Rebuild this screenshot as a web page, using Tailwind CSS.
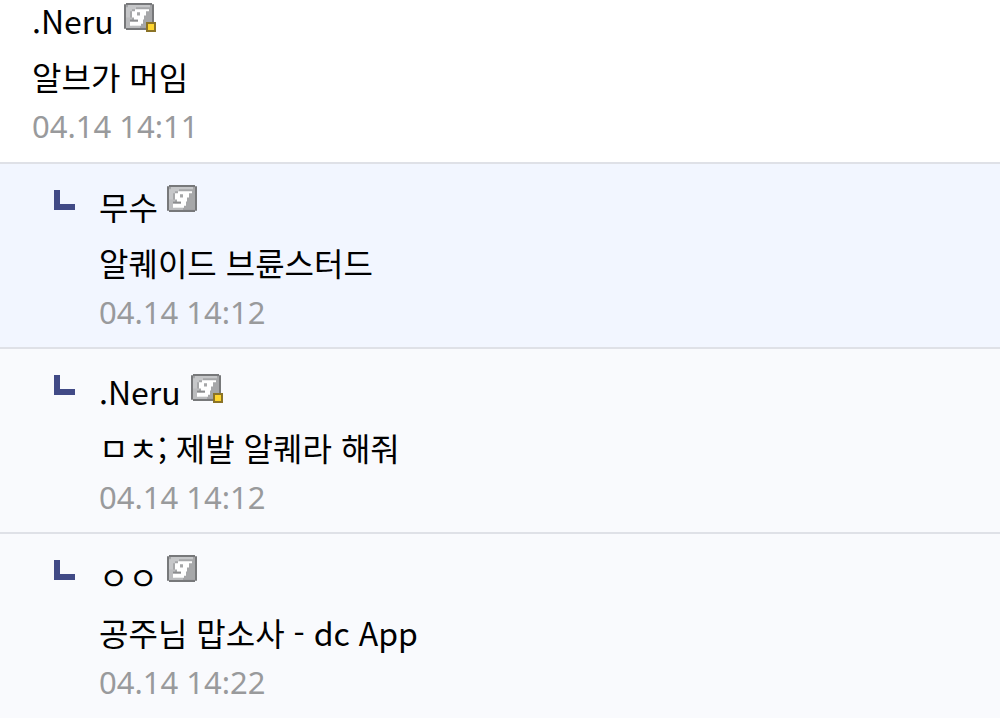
<!DOCTYPE html>
<html lang="ko">
<head>
<meta charset="utf-8">
<meta name="viewport" content="width=device-width, initial-scale=1">
<title>댓글</title>
<script src="https://cdn.jsdelivr.net/npm/@tailwindcss/browser@4"></script>
</head>
<body class="bg-[#f9fafd] font-['Noto_Sans_CJK_KR',sans-serif] text-[32px] text-black">
<svg class="hidden" aria-hidden="true">
  <symbol id="badge" viewBox="0 0 15 13" preserveAspectRatio="none">
    <path fill="#77787a" d="M1 0h13v.6H15v11.800H14v.6H1v-.6H0V.6h1z"/>
    <path fill="#a6a7a9" d="M1 1h13v11H1z"/>
    <path fill="#c6c7c9" d="M2 1h11v1H6v1H4v1H3v4H2v3H1V2h1z"/>
    <path fill="#bbbcbe" d="M1 7h3v4h4v1H1z"/>
    <path fill="#8b8c8e" d="M3 8h4v1H3z"/>
    <path fill="#fff" d="M5.500 3H12.500v1H11v2h-1v2H9.500v2H8.500v1H3V9h4V8H5V7H4V4h1.500zM6.500 4.500v1.500H8V4.500z"/>
  </symbol>
  <symbol id="reply" viewBox="0 0 21 20"><path fill="#414a86" d="M0 0h6v14h15v6H0z"/></symbol>
</svg>
<main>
  <ul>
    <li class="border-b-2 border-[#dfe1e7] bg-white px-8 pb-[13px]">
      <div class="flex gap-2.5">
        <span class="h-12 leading-[40px]">.Neru</span>
        <span class="relative mt-[3px] h-[27px] w-[30px]">
          <svg class="h-[27px] w-[30px]" role="img" aria-label="고정닉"><use href="#badge"/></svg>
          <span class="absolute -right-0.5 -bottom-0.5 size-2.5 border-2 border-[#8b7327] bg-[#ffd52e]"></span>
        </span>
      </div>
      <p class="h-[55px] leading-[56px]">알브가 머임</p>
      <time class="block h-[46px] font-['Noto_Sans',sans-serif] text-[31px] leading-[46px] text-[#999a9c]">04.14 14:11</time>
    </li>
    <li class="flex border-b-2 border-[#dfe1e7] bg-[#f2f6ff] pr-8 pb-3 pl-[54px]">
      <svg class="mt-[26px] mr-6 h-5 w-[21px] shrink-0" aria-hidden="true"><use href="#reply"/></svg>
      <div>
        <div class="flex gap-[9px]">
          <span class="h-[70px] pt-5 leading-[44px]">무수</span>
          <svg class="mt-[21px] h-[27px] w-[30px]" role="img" aria-label="고정닉"><use href="#badge"/></svg>
        </div>
        <p class="h-[55px] leading-[56px]">알퀘이드 브륜스터드</p>
        <time class="block h-[46px] font-['Noto_Sans',sans-serif] text-[31px] leading-[46px] text-[#999a9c]">04.14 14:12</time>
      </div>
    </li>
    <li class="flex border-b-2 border-[#dfe1e7] pr-8 pb-3 pl-[54px]">
      <svg class="mt-[26px] mr-6 h-5 w-[21px] shrink-0" aria-hidden="true"><use href="#reply"/></svg>
      <div>
        <div class="flex gap-2.5">
          <span class="h-[70px] pt-5 leading-[44px]">.Neru</span>
          <span class="relative mt-[25px] h-[27px] w-[30px]">
            <svg class="h-[27px] w-[30px]" role="img" aria-label="고정닉"><use href="#badge"/></svg>
            <span class="absolute -right-0.5 -bottom-0.5 size-2.5 border-2 border-[#8b7327] bg-[#ffd52e]"></span>
          </span>
        </div>
        <p class="h-[55px] leading-[56px]">ㅁㅊ; 제발 알퀘라 해줘</p>
        <time class="block h-[46px] font-['Noto_Sans',sans-serif] text-[31px] leading-[46px] text-[#999a9c]">04.14 14:12</time>
      </div>
    </li>
    <li class="flex pr-8 pl-[54px]">
      <svg class="mt-[26px] mr-6 h-5 w-[21px] shrink-0" aria-hidden="true"><use href="#reply"/></svg>
      <div>
        <div class="flex gap-[9px]">
          <span class="h-[70px] pt-5 leading-[44px]">ㅇㅇ</span>
          <svg class="mt-[21px] h-[27px] w-[30px]" role="img" aria-label="고정닉"><use href="#badge"/></svg>
        </div>
        <p class="h-[55px] leading-[56px]">공주님 맙소사 - dc App</p>
        <time class="block h-[46px] font-['Noto_Sans',sans-serif] text-[31px] leading-[46px] text-[#999a9c]">04.14 14:22</time>
      </div>
    </li>
  </ul>
</main>
</body>
</html>
